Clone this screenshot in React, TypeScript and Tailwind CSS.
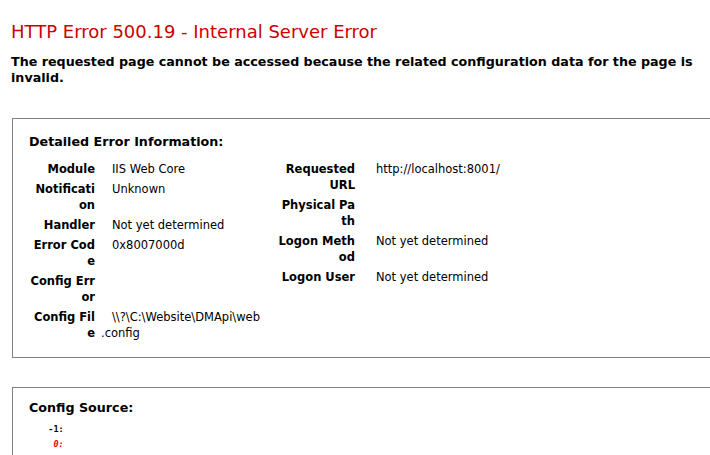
const font = "font-['DejaVu_Sans',Verdana,sans-serif]";

type Row = { label: string[]; value: string[] };

const leftRows: Row[] = [
  { label: ['Module'], value: ['IIS Web Core'] },
  { label: ['Notificati', 'on'], value: ['Unknown'] },
  { label: ['Handler'], value: ['Not yet determined'] },
  { label: ['Error Cod', 'e'], value: ['0x8007000d'] },
  { label: ['Config Err', 'or'], value: [] },
  { label: ['Config Fil', 'e'], value: ['\\\\?\\C:\\Website\\DMApi\\web', '.config'] },
];

const rightRows: Row[] = [
  { label: ['Requested', 'URL'], value: ['http://localhost:8001/'] },
  { label: ['Physical Pa', 'th'], value: [] },
  { label: ['Logon Meth', 'od'], value: ['Not yet determined'] },
  { label: ['Logon User'], value: ['Not yet determined'] },
];

const DetailTable = ({
  rows,
  labelWidth,
  valueWidth,
}: {
  rows: Row[];
  labelWidth: string;
  valueWidth: string;
}) => (
  <div className="flex flex-col">
    {rows.map((row) => (
      <div key={row.label.join('')} className="flex py-[2px] text-[11.5px] leading-[16px]">
        <div className={`${labelWidth} shrink-0 pr-[5px] text-right font-bold`}>
          {row.label.map((l) => (
            <div key={l}>{l}</div>
          ))}
        </div>
        <div className={`${valueWidth} shrink-0`}>
          {row.value.map((v, i) => (
            <div key={v}>
              {i === 0 ? '\u00a0\u00a0\u00a0' : ''}
              {v}
            </div>
          ))}
        </div>
      </div>
    ))}
  </div>
);

export default function App() {
  return (
    <div className={`h-[455px] w-[710px] overflow-hidden bg-white text-black ${font}`}>
      <div className="pl-[11px] pt-[20px]">
        <h2 className="text-[18px] leading-[23px] text-[#cc0000]">HTTP Error 500.19 - Internal Server Error</h2>
        <h3 className="mt-[11px] w-[700px] text-[12.7px] font-bold leading-[16px]">
          The requested page cannot be accessed because the related configuration data for the page is invalid.
        </h3>
      </div>

      {/* Detailed error info */}
      <div className="ml-[12px] mt-[32px] w-[760px] border border-[#808080] pb-[14px] pl-[16px] pt-[15px]">
        <h4 className="text-[12.7px] font-bold leading-[16px]">Detailed Error Information:</h4>
        <div className="mt-[9px] flex">
          <DetailTable rows={leftRows} labelWidth="w-[71px]" valueWidth="w-[172px] pl-[1px]" />
          <DetailTable rows={rightRows} labelWidth="w-[88px]" valueWidth="w-[300px] pl-[5px]" />
        </div>
      </div>

      {/* Config source */}
      <div className="ml-[12px] mt-[29px] h-[120px] w-[760px] border border-[#808080] pl-[16px] pt-[12px]">
        <h4 className="text-[12.7px] font-bold leading-[16px]">Config Source:</h4>
        <div className="mt-[6px] pl-[4px] font-['DejaVu_Sans_Mono',monospace] text-[8.5px] font-bold leading-[15px] whitespace-pre">
          <div>{'   -1: '}</div>
          <div className="italic text-[#e00000]">{'    0: '}</div>
        </div>
      </div>
    </div>
  );
}
